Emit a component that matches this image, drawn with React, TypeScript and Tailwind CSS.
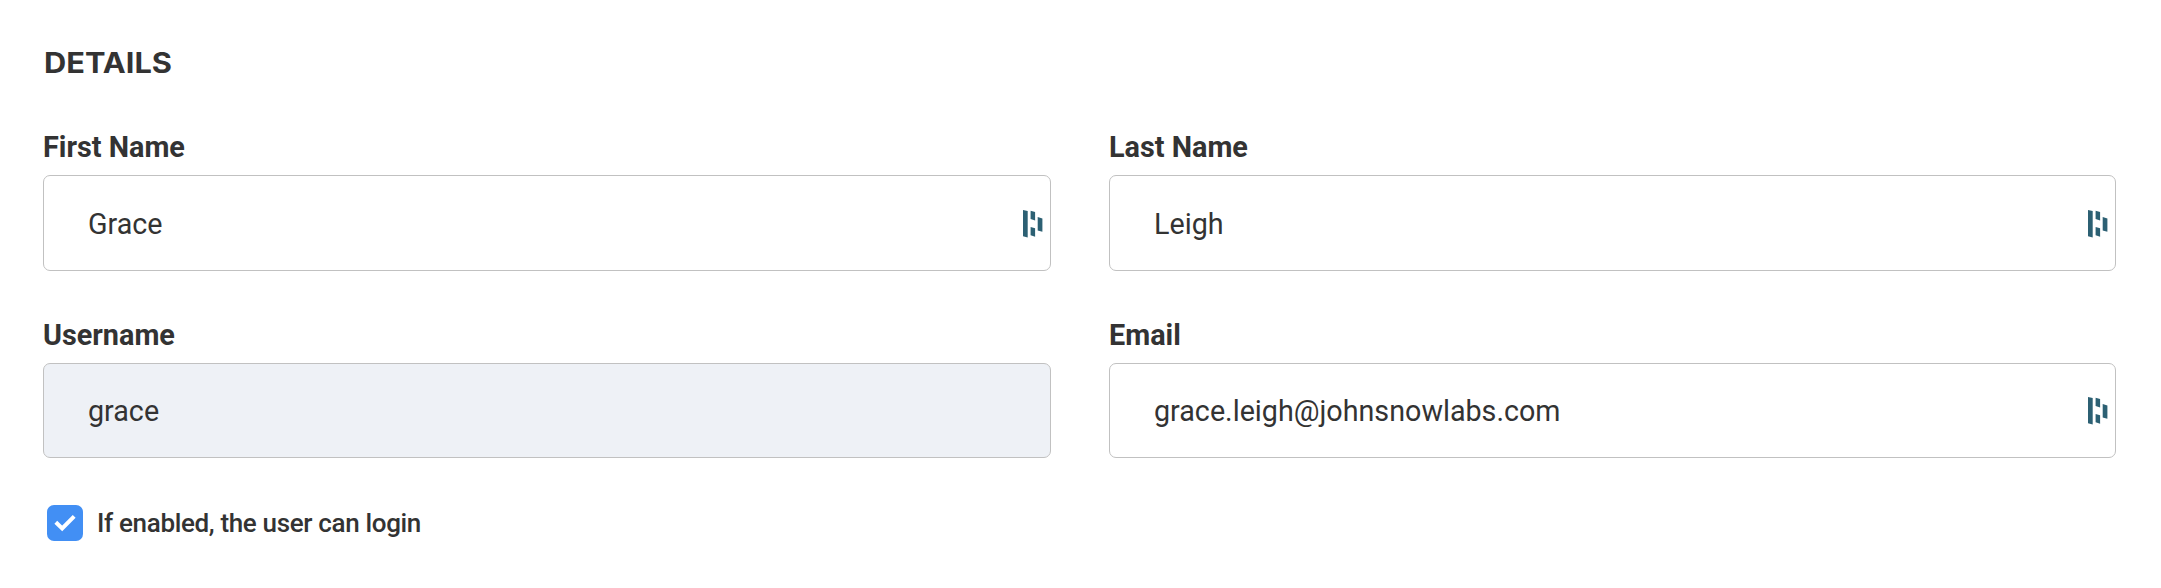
import React from "react";

function ManagerIcon() {
  return (
    <svg width="20" height="28" viewBox="0 0 20 28" className="mt-[2px] shrink-0" fill="#2c6073" aria-hidden="true">
      <path d="M0 0 4.7 1.1V27.4L0 26.3Z" />
      <path d="M7.6 0.8 12.1 2V10.4L7.6 8.9Z" />
      <path d="M7.6 17 12.1 18.2V26.8L7.6 25.3Z" />
      <path d="M14.7 7.1 19.4 8.4V21.7L14.7 20.6Z" />
    </svg>
  );
}

type FieldProps = {
  label: string;
  value: string;
  boxClass: string;
  icon?: boolean;
};

function Field({ label, value, boxClass, icon = true }: FieldProps) {
  return (
    <div>
      <div className="mb-[12px] h-[31px] text-[28.8px] leading-[30px] font-bold">{label}</div>
      <div className={`flex items-center justify-between rounded-[7px] border border-[#c1c1c1] pr-[7px] pl-[44px] ${boxClass}`}>
        <span className="text-[28.7px] leading-8">{value}</span>
        {icon && <ManagerIcon />}
      </div>
    </div>
  );
}

export default function App() {
  return (
    <main className="h-[588px] w-[2161px] bg-white pt-[46px] pr-[45px] pl-[43px] font-['Roboto',sans-serif] text-[#333333]">
      <div className="h-[86px] pl-px">
        <h2 className="inline-block origin-left scale-x-110 font-['Inter',sans-serif] text-[28px] leading-[34px] font-bold">DETAILS</h2>
      </div>
      <div className="grid grid-cols-[1008px_1007px] gap-x-[58px]">
        <Field label="First Name" value="Grace" boxClass="h-24 [&>span]:pt-[2px]" />
        <Field label="Last Name" value="Leigh" boxClass="h-24 [&>span]:pt-[2px]" />
      </div>
      <div className="mt-[49px] grid grid-cols-[1008px_1007px] gap-x-[58px]">
        <Field label="Username" value="grace" boxClass="h-[95px] bg-[#eef1f6]" icon={false} />
        <Field label="Email" value="grace.leigh@johnsnowlabs.com" boxClass="h-[95px] [&>svg]:mt-px" />
      </div>
      <div className="mt-[47px] flex items-center pl-1">
        <div className="flex size-9 items-center justify-center rounded-[7px] bg-[#428ff4]">
          <svg width="22" height="18" viewBox="0 0 22 18" fill="none" stroke="#fff" strokeWidth="4" aria-hidden="true">
            <path d="M1.8 8.2 8.2 14.4 20.2 2.3" />
          </svg>
        </div>
        <span className="ml-[14px] text-[26px] leading-[30px] font-medium tracking-[-0.34px]">If enabled, the user can login</span>
      </div>
    </main>
  );
}
